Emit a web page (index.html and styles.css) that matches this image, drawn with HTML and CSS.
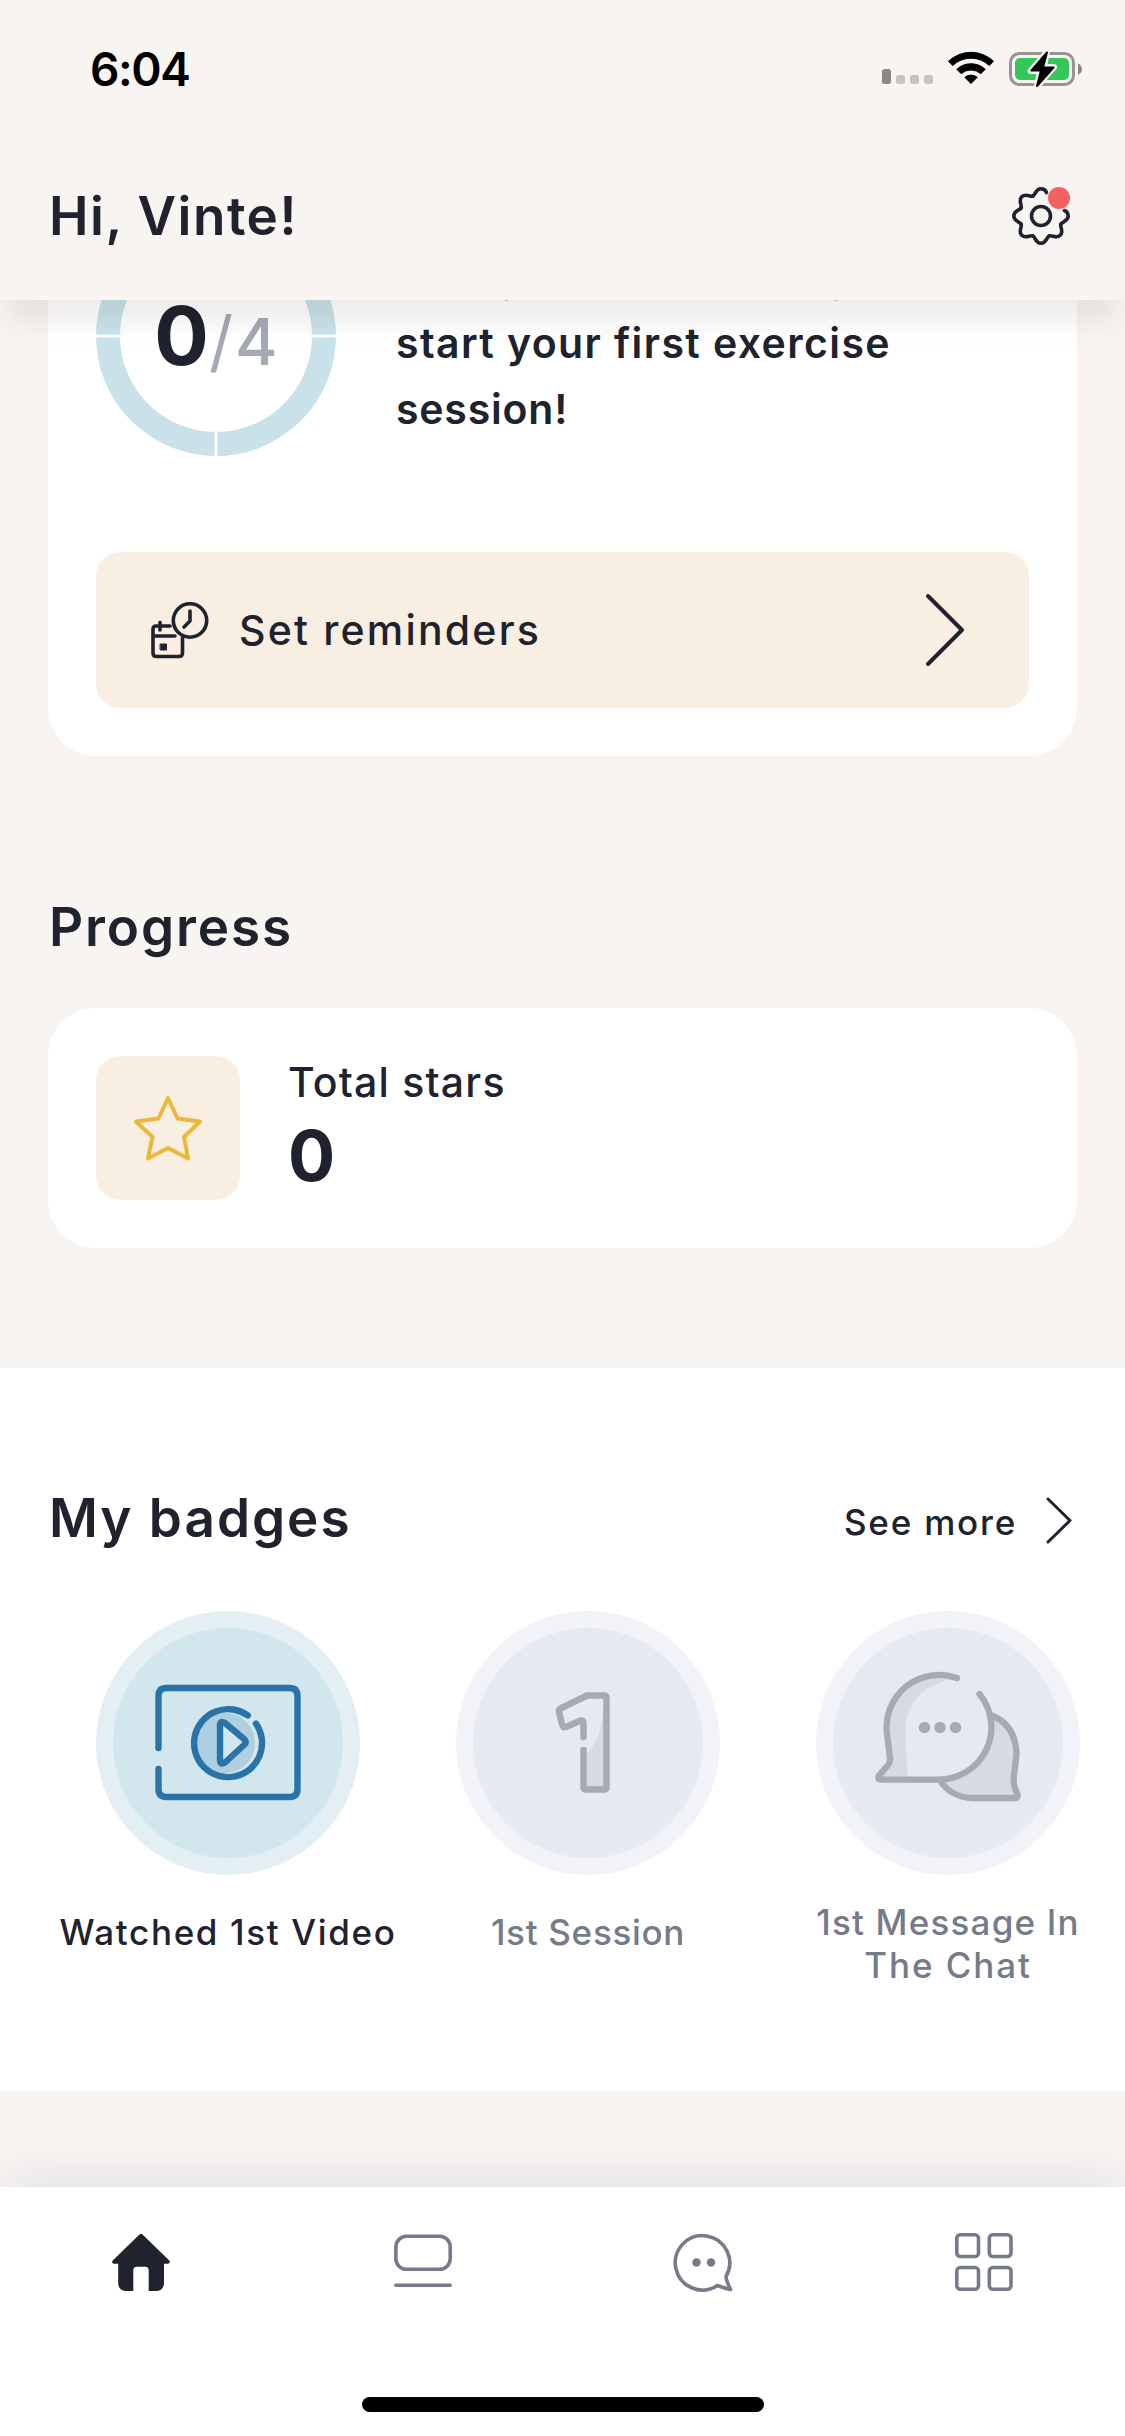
FILE: index.html
```html
<!DOCTYPE html>
<html lang="en">
<head>
<meta charset="utf-8">
<title>Home</title>
<link rel="stylesheet" href="styles.css">
</head>
<body>
<div class="screen">
  <header class="top">
    <div class="status">
      <span class="time">6:04</span>
      <svg class="status-icons" width="202" height="38" viewBox="0 0 202 38">
        <rect x="2" y="20" width="9" height="15" rx="2.5" fill="#8a8988"/>
        <g fill="#c6c4c3"><rect x="16" y="26" width="9" height="9" rx="2.5"/><rect x="30" y="26" width="9" height="9" rx="2.5"/><rect x="44" y="26" width="9" height="9" rx="2.5"/></g>
        <path d="M68.500 12.200a33 33 0 0 1 45 0l-4.200 4.300a26.500 26.500 0 0 0-36.600 0z" stroke="#000" stroke-width="1" stroke-linejoin="round"/>
        <path d="M76.800 20.300a21 21 0 0 1 28.400 0l-4.400 4.400a14.700 14.700 0 0 0-19.600 0z" stroke="#000" stroke-width="1" stroke-linejoin="round"/>
        <path d="M84.800 28.300a9.800 9.800 0 0 1 12.400 0L91 34.500z" stroke="#000" stroke-width="1" stroke-linejoin="round"/>
        <rect x="130.500" y="4.500" width="63" height="31" rx="9" fill="none" stroke="#979493" stroke-width="3"/>
        <path d="M198 14.500q4 2 4 5.700t-4 5.700z" fill="#8a8988"/>
        <rect x="135" y="9" width="54" height="22" rx="5" fill="#34c759"/>
        <path d="M167 3L150.500 22h9.500l-3 15.500L174 18h-10z" fill="#000" stroke="#f8f4f1" stroke-width="6" stroke-linejoin="round"/>
        <path d="M167 3.500L151.500 21.500h9.500l-4 15.500L173.500 18.500h-10.500z" fill="#000" stroke="#000" stroke-width="2" stroke-linejoin="round"/>
      </svg>
    </div>
    <div class="greeting">
      <h1 class="heading heading-hi">Hi, Vinte!</h1>
      <svg width="60" height="60" viewBox="-30 -30 60 60">
        <defs><path id="tooth" d="M-8.230 -19.860C-5.460 -21 -5.500 -27.200 0 -27.200C5.500 -27.200 5.460 -21 8.230 -19.860"/></defs>
        <g fill="none" stroke="#20222d" stroke-width="3.600" stroke-linecap="round" stroke-linejoin="round">
          <path d="M-8.230 -19.860C-5.460 -21 -5.500 -27.200 0 -27.200C3.500 -27.200 4.800 -25.500 5.500 -23.400"/>
          <path transform="rotate(90)" d="M-5.500 -23.400C-4.800 -25.500 -3.500 -27.200 0 -27.200C5.500 -27.200 5.460 -21 8.230 -19.860"/>
          <use href="#tooth" transform="rotate(135)"/><use href="#tooth" transform="rotate(180)"/><use href="#tooth" transform="rotate(225)"/><use href="#tooth" transform="rotate(270)"/><use href="#tooth" transform="rotate(315)"/>
          <circle r="9.500"/>
        </g>
        <circle cx="18" cy="-18" r="11" fill="#f56161"/>
      </svg>
    </div>
  </header>

  <main class="content">
    <section class="card goal">
      <div class="goal-row">
        <div class="ring">
          <svg class="ring-track" width="240" height="240" viewBox="0 0 240 240">
            <circle cx="120" cy="120" r="108" fill="none" stroke="#c9e2e9" stroke-width="24"/>
            <path d="M120 0v26M120 214v26M0 120h26M214 120h26" stroke="#fff" stroke-width="3"/>
          </svg>
          <span class="count">0</span><span class="slash">/</span><span class="total">4</span>
        </div>
        <p class="goal-text"><span class="line1">Today is the best day to</span><br><span class="line2">start your first exercise</span><br><span class="line3">session!</span></p>
      </div>
      <div class="reminders">
        <svg width="60" height="60" viewBox="0 0 60 60" fill="none" stroke="#20222d" stroke-width="3.600" stroke-linecap="round" stroke-linejoin="round">
          <path d="M20 26H6q-3 0-3 3V53q0 3.500 3.500 3.500H29q3.500 0 3.500-3.500V38M3 36H25M10 22.500V30"/>
          <circle cx="40" cy="20.500" r="16.700"/>
          <path d="M40 11v10l-6 6"/>
          <rect x="10.500" y="44" width="6" height="6" fill="#20222d" stroke-width="1"/>
        </svg>
        <span class="reminders-label">Set reminders</span>
        <svg width="40" height="74" viewBox="0 0 40 74" fill="none" stroke="#20222d" stroke-width="4" stroke-linecap="round" stroke-linejoin="round"><path d="M3 3L37 37L3 71"/></svg>
      </div>
    </section>

    <h2 class="heading heading-progress">Progress</h2>
    <section class="card stars">
      <div class="star-tile">
        <svg width="72" height="72" viewBox="0 0 72 72" fill="none" stroke="#ecb83a" stroke-width="4" stroke-linejoin="round"><path d="M36 6L45.500 26.500L68 29.500L52 45L56 66.500L36 56L16 66.500L20.500 45L4 29.500L26.500 26.500Z"/></svg>
      </div>
      <div class="stars-info">
        <span class="stars-label">Total stars</span>
        <span class="stars-value">0</span>
      </div>
    </section>

    <section class="badges">
      <div class="badges-head">
        <h2 class="heading heading-badges">My badges</h2>
        <a class="more"><span class="more-label">See more</span>
          <svg width="26" height="48" viewBox="0 0 26 48" fill="none" stroke="#20222d" stroke-width="3" stroke-linecap="round" stroke-linejoin="round"><path d="M2 3L24 24.500L2 46"/></svg>
        </a>
      </div>
      <div class="badge-list">
        <div class="badge earned">
          <div class="disc">
            <svg width="230" height="230" viewBox="0 0 230 230" fill="none" stroke="#2a73a8" stroke-width="6.400" stroke-linecap="round" stroke-linejoin="round">
              <circle cx="112" cy="115" r="30" fill="#afcee0" stroke="none"/>
              <path d="M45.500 120V68q0-8 8-8H176.500q8 0 8 8V161q0 8-8 8H53.500q-8 0-8-8V141"/>
              <path d="M134.800 87.400A34 34 0 1 0 143 95.700"/>
              <path d="M107 97.500V131.500q0 6 5 3L131 117q3.500-3 0-6L112 95q-5-3-5 2.500z" fill="#d2e6ed"/>
            </svg>
          </div>
          <span class="badge-label lab-video">Watched 1st Video</span>
        </div>
        <div class="badge">
          <div class="disc">
            <svg width="230" height="230" viewBox="0 0 230 230" fill="none" stroke="#a4aab6" stroke-width="6.500" stroke-linecap="round" stroke-linejoin="round">
              <path d="M130 83Q128 112 113 127V162H133V83z" fill="#d7dae2" stroke="none"/>
              <path d="M110.500 109V95q0-3-3-2.500L93 99q-3 1-3.800-2L86 84q-.5-2.500 1.500-3.500L114 67.500H131q2.500 0 2.500 2.500V159q0 2.500-2.500 2.500H113q-2.500 0-2.500-2.500V122"/>
            </svg>
          </div>
          <span class="badge-label lab-session">1st Session</span>
        </div>
        <div class="badge">
          <div class="disc">
            <svg width="230" height="230" viewBox="0 0 230 230" fill="none" stroke="#a4aab6" stroke-width="6.300" stroke-linecap="round" stroke-linejoin="round">
              <path d="M161 88Q183 98 182 127Q179 145 181 155L185 169H138Q118 169 108 151Q158 145 161 88z" fill="#d7dae2" stroke="none"/>
              <path d="M123 50Q73 60 72 103L75 151H47L57 137L54 101Q54 49 105 47z" fill="#d7dae2" stroke="none"/>
              <path d="M124 50A52.500 52.500 0 0 0 54 106L57 130Q57.500 134 55 137L46 147.500Q44 151.600 48 151.600H106A52.400 52.400 0 0 0 146.500 66"/>
              <path d="M160 88Q183 98 183.500 127L181 147Q180 155 182 160L184.500 166.500Q185 170 182.500 170H138Q119 169 108 154"/>
              <g fill="#a4aab6" stroke="none"><circle cx="91.500" cy="99.500" r="5.700"/><circle cx="107" cy="99.500" r="5.700"/><circle cx="122.500" cy="99.500" r="5.700"/></g>
            </svg>
          </div>
          <span class="badge-label two-line"><span class="lab-m1">1st Message In</span><br><span class="lab-m2">The Chat</span></span>
        </div>
      </div>
    </section>
  </main>

  <nav class="tabs">
    <div class="tab-row">
      <svg width="60" height="60" viewBox="0 0 60 60"><path d="M28.500 2.500Q30 1 31.500 2.500L58.300 28.500Q60 31.500 56.500 31.800H53V52Q52 58.500 46 59H37.700V38.500Q37.700 35 34.500 34.800H25.500Q22.300 35 22.300 38.500V59H14.500Q8 58.500 7.200 52V31.800H3Q0 31.500 1.700 28.500Z" fill="#20222d"/></svg>
      <svg width="60" height="60" viewBox="0 0 60 60" fill="none" stroke="#757b88" stroke-width="3.600" stroke-linecap="round"><rect x="3.900" y="4.300" width="54.300" height="33" rx="10.500"/><path d="M3.900 53.200H58.200"/></svg>
      <svg width="60" height="60" viewBox="0 0 60 60" fill="none" stroke="#757b88" stroke-width="3.600" stroke-linejoin="round"><path d="M44.500 53.500A27.200 27.200 0 1 1 53 44.500Q53 48 57.500 57.500Q48 55 44.500 53.500z"/><g fill="#757b88" stroke="none"><circle cx="23.500" cy="30.500" r="4.200"/><circle cx="38" cy="30.500" r="4.200"/></g></svg>
      <svg width="60" height="60" viewBox="0 0 60 60" fill="none" stroke="#757b88" stroke-width="3.600"><rect x="2.800" y="2.800" width="21.700" height="21.700" rx="3.500"/><rect x="35.300" y="2.800" width="21.700" height="21.700" rx="3.500"/><rect x="2.800" y="35.500" width="21.700" height="21.700" rx="3.500"/><rect x="35.300" y="35.500" width="21.700" height="21.700" rx="3.500"/></svg>
    </div>
    <div class="home-bar"></div>
  </nav>
</div>
</body>
</html>
```
FILE: styles.css
```css
* { box-sizing: border-box; margin: 0; padding: 0; }
body { background: #f8f4f1; font-family: "Inter", sans-serif; color: #20222d; }
svg { display: block; flex: none; }
span { white-space: nowrap; }

.screen { width: 1125px; height: 2436px; overflow: hidden; display: flex; flex-direction: column; background: #f8f4f1; }

.top { position: relative; z-index: 2; height: 300px; flex: none; background: #f8f4f1; box-shadow: 0 30px 28px -8px rgba(0, 0, 0, .08); }
.status { height: 132px; padding: 49px 43px 0 90px; display: flex; justify-content: space-between; }
.time { font-size: 46px; font-weight: 600; line-height: 40px; color: #000; letter-spacing: -1.4px; }
.greeting { height: 168px; padding: 0 54px 0 48px; display: flex; align-items: center; justify-content: space-between; }
.heading { font-size: 53px; font-weight: 600; line-height: 66px; white-space: nowrap; padding-left: 1px; }
.heading-hi { letter-spacing: 1.5px; }

.content { flex: 1; min-height: 0; position: relative; z-index: 1; }
.card { margin: 0 48px; background: #fff; border-radius: 48px; padding: 48px; }
.goal { margin-top: -132px; height: 588px; }
.goal-row { display: flex; height: 240px; align-items: center; }
.ring { position: relative; width: 240px; height: 240px; flex: none; display: flex; justify-content: center; align-items: baseline; padding-top: 71px; }
.ring-track { position: absolute; inset: 0; }
.count { font-size: 81px; font-weight: 700; line-height: 98px; }
.slash, .total { font-weight: 500; color: #a4a9b6; }
.slash { font-size: 67px; font-weight: 400; letter-spacing: 2px; }
.total { font-size: 65px; }
.goal-text { margin-left: 60px; font-size: 41px; font-weight: 600; line-height: 66px; padding-top: 14px; }
.line1 { letter-spacing: 2px; }
.line2 { letter-spacing: 1.4px; }
.line3 { letter-spacing: .8px; }
.reminders { margin-top: 96px; height: 156px; border-radius: 24px; background: #f8efe2; padding: 0 64px 0 54px; display: flex; align-items: center; }
.reminders-label { margin-left: 29px; flex: 1; font-size: 41px; font-weight: 500; letter-spacing: 2.2px; }

.heading-progress { margin: 138px 48px 48px; letter-spacing: 1.9px; }
.stars { height: 240px; display: flex; gap: 48px; }
.star-tile { width: 144px; height: 144px; border-radius: 24px; background: #f8efe2; display: flex; align-items: center; justify-content: center; }
.stars-info { display: flex; flex-direction: column; }
.stars-label { font-size: 41px; font-weight: 500; line-height: 52px; letter-spacing: 1.2px; }
.stars-value { font-size: 70px; font-weight: 700; line-height: 84px; margin-top: 6px; }

.badges { margin-top: 120px; height: 723px; background: #fff; padding-top: 117px; }
.badges-head { padding: 0 53px 0 48px; display: flex; justify-content: space-between; align-items: center; }
.heading-badges { letter-spacing: 2px; }
.more { display: flex; align-items: center; gap: 29px; padding-top: 4px; }
.more-label { font-size: 35px; font-weight: 500; letter-spacing: 1.8px; padding-top: 3px; }
.badge-list { margin: 60px 0 0 48px; display: flex; }
.badge { width: 360px; flex: none; display: flex; flex-direction: column; align-items: center; color: #757b88; }
.disc { width: 264px; height: 264px; border-radius: 50%; border: 17px solid #f2f3f8; background: #e6e9f2; }
.earned { color: #20222d; }
.earned .disc { border-color: #e4eff4; background: #d2e6ed; }
.badge-label { font-size: 35px; font-weight: 500; line-height: 43px; margin-top: 36px; text-align: center; }
.two-line { margin-top: 26px; }
.lab-video { letter-spacing: 1.65px; }
.lab-session { letter-spacing: .7px; }
.lab-m1 { letter-spacing: 1.2px; }
.lab-m2 { letter-spacing: 1.9px; }

.tabs { position: relative; z-index: 3; height: 249px; flex: none; background: #fff; box-shadow: 0 -12px 44px -4px rgba(150, 155, 205, .2); display: flex; flex-direction: column; align-items: center; }
.tab-row { width: 100%; padding-top: 45px; display: grid; grid-template-columns: repeat(4, 1fr); justify-items: center; }
.home-bar { width: 402px; height: 15px; border-radius: 8px; background: #000; margin-top: 105px; }
```
